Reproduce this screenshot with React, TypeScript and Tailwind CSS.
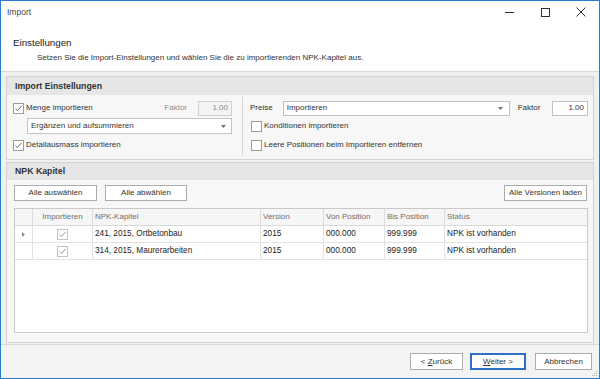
import React from "react";

const Check = ({ checked, light }: { checked?: boolean; light?: boolean }) => (
  <span
    className={`w-[11px] h-[11px] shrink-0 border ${light ? "border-[#c4c4c4]" : "border-[#9c9c9c]"} bg-white flex items-center justify-center`}
  >
    {checked && (
      <svg width="9" height="9" viewBox="0 0 9 9">
        <path d="M1.5 4.6 L3.4 6.6 L7.6 1.8" stroke={light ? "#9a9a9a" : "#6a6a6a"} fill="none" strokeWidth="1" />
      </svg>
    )}
  </span>
);

const Arrow = () => (
  <svg width="5" height="3" viewBox="0 0 5 3" className="shrink-0">
    <path d="M0 0 H5 L2.5 3 Z" fill="#707070" />
  </svg>
);

const Btn = ({ children, className = "" }: { children: React.ReactNode; className?: string }) => (
  <div
    className={`h-[16px] border border-[#acacac] bg-white flex items-center justify-center text-[#333] ${className}`}
  >
    {children}
  </div>
);

export default function App() {
  const font = "font-['Liberation_Sans',Arial,sans-serif]";
  const cols = [
    { w: "w-[18px]", label: "" },
    { w: "w-[60px]", label: "Importieren", center: true },
    { w: "w-[168px]", label: "NPK-Kapitel" },
    { w: "w-[63px]", label: "Version" },
    { w: "w-[61px]", label: "Von Position" },
    { w: "w-[60px]", label: "Bis Position" },
    { w: "w-[141px]", label: "Status", last: true },
  ];
  const rows = [
    ["241, 2015, Ortbetonbau", "2015", "000.000", "999.999", "NPK ist vorhanden"],
    ["314, 2015, Maurerarbeiten", "2015", "000.000", "999.999", "NPK ist vorhanden"],
  ];
  return (
    <div
      className={`${font} relative w-[600px] h-[379px] border border-[#2b7bd3] flex flex-col bg-[#f0f0f0] overflow-hidden text-[8px] text-[#333] leading-none`}
    >
      {/* Title bar */}
      <div className="h-[22px] bg-white flex items-center pl-[6px] shrink-0">
        <span className="text-[8.5px] text-[#444]">Import</span>
        <div className="ml-auto flex items-center h-full">
          <div className="w-[36px] h-full flex items-center justify-center">
            <div className="w-[9px] h-px bg-[#333]" />
          </div>
          <div className="w-[36px] h-full flex items-center justify-center">
            <div className="w-[9px] h-[9px] border border-[#333]" />
          </div>
          <div className="w-[36px] h-full flex items-center justify-center">
            <svg width="10" height="10" viewBox="0 0 10 10">
              <path d="M0.5 0.5 L9.5 9.5 M9.5 0.5 L0.5 9.5" stroke="#333" strokeWidth="1" />
            </svg>
          </div>
        </div>
      </div>

      {/* Header */}
      <div className="h-[49px] bg-white border-b border-[#d9d9d9] shrink-0 pl-[12px] pt-[15px]">
        <div className="text-[9.75px] text-[#222]">Einstellungen</div>
        <div className="pl-[24px] pt-[6px] text-[#333]">
          Setzen Sie die Import-Einstellungen und wählen Sie die zu importierenden NPK-Kapitel aus.
        </div>
      </div>

      {/* Body */}
      <div className="flex-1 px-[5px] pt-[4px] pb-[1px] flex flex-col gap-[2px]">
        {/* Group 1 */}
        <div className="h-[84px] border border-[#d3d3d3] bg-[#f7f7f7] flex flex-col">
          <div className="h-[18px] bg-[#e6e6e6] flex items-center pl-[8px] font-bold text-[8.75px] text-[#333] shrink-0">
            Import Einstellungen
          </div>
          <div className="flex pl-[6px] pr-[5px] pt-[5px]">
            {/* Left column */}
            <div className="w-[219px] flex flex-col">
              <div className="h-[16px] flex items-center">
                <Check checked />
                <span className="ml-[2px]">Menge importieren</span>
                <span className="ml-auto text-[#8c8c8c]">Faktor</span>
                <div className="ml-[11px] w-[34px] h-[15px] border border-[#d0d0d0] bg-[#f4f4f4] flex items-center justify-end pr-[3px] text-[#8c8c8c]">
                  1.00
                </div>
              </div>
              <div className="mt-[2px] ml-[14px] h-[16px] border border-[#c3c3c3] bg-white flex items-center pl-[3px] pr-[5px]">
                <span>Ergänzen und aufsummieren</span>
                <span className="ml-auto">
                  <Arrow />
                </span>
              </div>
              <div className="mt-[3px] h-[16px] flex items-center">
                <Check checked />
                <span className="ml-[2px]">Detailausmass importieren</span>
              </div>
            </div>
            <div className="ml-[10px] w-px bg-[#d6d6d6] -mt-[3px] mb-[-3px]" />
            {/* Right column */}
            <div className="ml-[7px] flex-1 flex flex-col">
              <div className="h-[16px] flex items-center">
                <span>Preise</span>
                <div className="ml-[10px] w-[227px] h-[15px] border border-[#c3c3c3] bg-white flex items-center pl-[3px] pr-[6px]">
                  <span>Importieren</span>
                  <span className="ml-auto">
                    <Arrow />
                  </span>
                </div>
                <span className="ml-[8px]">Faktor</span>
                <div className="ml-auto w-[36px] h-[15px] border border-[#c3c3c3] bg-white flex items-center justify-end pr-[3px]">
                  1.00
                </div>
              </div>
              <div className="mt-[2px] h-[16px] flex items-center pl-[1px]">
                <Check />
                <span className="ml-[2px]">Konditionen importieren</span>
              </div>
              <div className="mt-[3px] h-[16px] flex items-center pl-[1px]">
                <Check />
                <span className="ml-[2px]">Leere Positionen beim Importieren entfernen</span>
              </div>
            </div>
          </div>
        </div>

        {/* Group 2 */}
        <div className="flex-1 border border-[#d3d3d3] bg-[#f7f7f7] flex flex-col">
          <div className="h-[17px] bg-[#e6e6e6] flex items-center pl-[8px] font-bold text-[8.75px] text-[#333] shrink-0">
            NPK Kapitel
          </div>
          <div className="flex-1 flex flex-col pl-[7px] pr-[5px] pt-[5px] pb-[9px]">
            <div className="flex items-center">
              <Btn className="w-[83px]">Alle auswählen</Btn>
              <Btn className="w-[82px] ml-[8px]">Alle abwählen</Btn>
              <Btn className="w-[83px] ml-auto mr-px">Alle Versionen laden</Btn>
            </div>
            <div className="mt-[7px] flex-1 border border-[#c9c9c9] bg-white flex flex-col">
              <div className="h-[17px] flex bg-[#f6f6f6] border-b border-[#dadada] text-[#6e6e6e]">
                {cols.map((c, i) => (
                  <div
                    key={i}
                    className={`${c.w} h-full flex items-center ${c.center ? "justify-center" : "pl-[2px]"} ${c.last ? "" : "border-r border-[#dcdcdc]"}`}
                  >
                    {c.label}
                  </div>
                ))}
              </div>
              {rows.map((r, ri) => (
                <div key={ri} className="h-[17px] flex border-b border-[#e2e2e2] text-[#222] text-[8.25px]">
                  <div className="w-[18px] h-full flex items-center justify-center border-r border-[#e2e2e2]">
                    {ri === 0 && (
                      <svg width="3" height="5" viewBox="0 0 3 5">
                        <path d="M0 0 L3 2.5 L0 5 Z" fill="#8a8a8a" />
                      </svg>
                    )}
                  </div>
                  <div className="w-[60px] h-full flex items-center justify-center border-r border-[#e2e2e2]">
                    <Check checked light />
                  </div>
                  <div className="w-[168px] h-full flex items-center pl-[2px] border-r border-[#e2e2e2]">{r[0]}</div>
                  <div className="w-[63px] h-full flex items-center pl-[2px] border-r border-[#e2e2e2]">{r[1]}</div>
                  <div className="w-[61px] h-full flex items-center pl-[2px] border-r border-[#e2e2e2]">{r[2]}</div>
                  <div className="w-[60px] h-full flex items-center pl-[2px] border-r border-[#e2e2e2]">{r[3]}</div>
                  <div className="w-[141px] h-full flex items-center pl-[2px]">{r[4]}</div>
                </div>
              ))}
            </div>
          </div>
        </div>
      </div>

      {/* Footer */}
      <div className="h-[34px] border-t border-[#d9d9d9] bg-[#f3f3f3] shrink-0 flex items-start justify-end pt-[8px] pr-[7px]">
        <Btn className="w-[53px] h-[17px]">
          <span>
            &lt; <span className="underline">Z</span>urück
          </span>
        </Btn>
        <div className="ml-[7px] w-[56px] h-[17px] border-2 border-[#2f6fc4] bg-white flex items-center justify-center text-[#333]">
          <span>
            <span className="underline">W</span>eiter &gt;
          </span>
        </div>
        <Btn className="ml-[9px] w-[57px] h-[17px]">Abbrechen</Btn>
      </div>

      {/* Resize grip */}
      <svg className="absolute right-[1px] bottom-[1px]" width="6" height="6" viewBox="0 0 6 6">
        <rect x="4" y="0" width="1" height="1" fill="#b0b0b0" />
        <rect x="2" y="2" width="1" height="1" fill="#b0b0b0" />
        <rect x="4" y="2" width="1" height="1" fill="#b0b0b0" />
        <rect x="0" y="4" width="1" height="1" fill="#b0b0b0" />
        <rect x="2" y="4" width="1" height="1" fill="#b0b0b0" />
        <rect x="4" y="4" width="1" height="1" fill="#b0b0b0" />
      </svg>
    </div>
  );
}
